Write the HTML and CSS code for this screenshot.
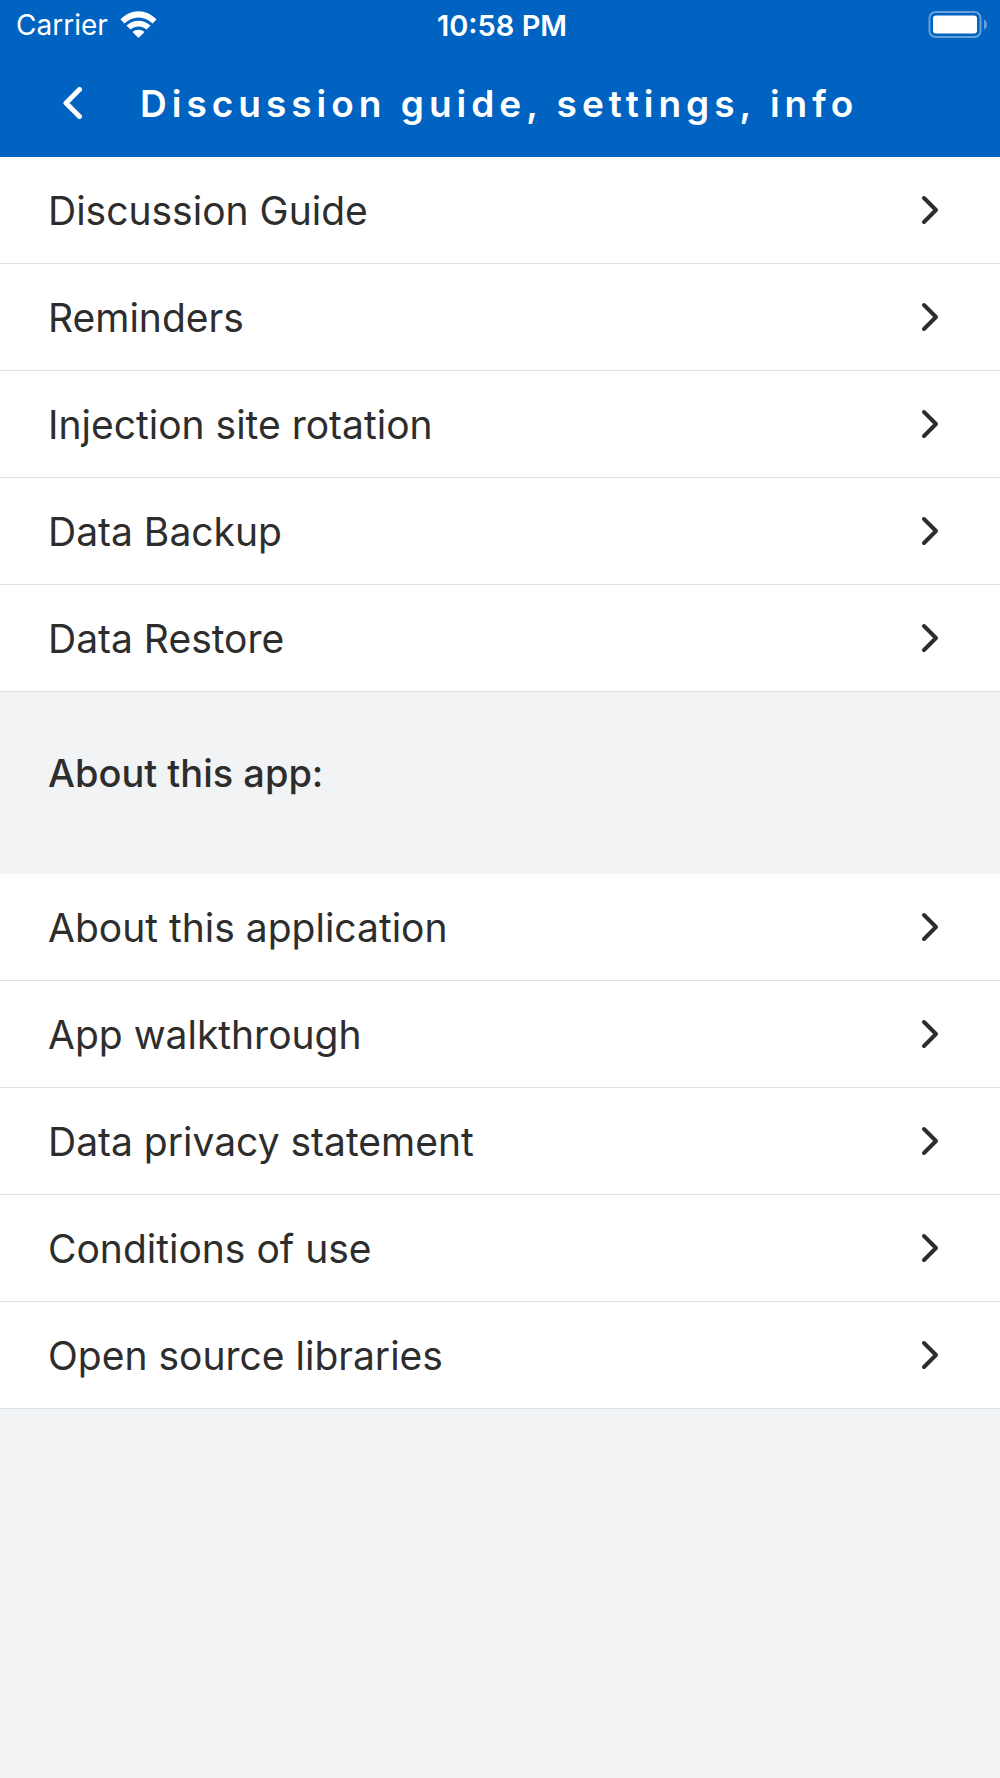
FILE: index.html
```html
<!DOCTYPE html>
<html lang="en">
<head>
    <meta charset="UTF-8">
    <meta name="viewport" content="width=device-width, initial-scale=1.0">
    <title>Discussion guide, settings, info</title>
    <link rel="stylesheet" href="styles.css">
</head>
<body>
    <header>
        <div class="status-bar">
            <div class="carrier">
                <span>Carrier</span>
                <svg class="wifi" viewBox="0 0 37 28" aria-hidden="true">
                    <path d="M0.5 8.5C10.5 -2.5 26.5 -2.5 36.5 8.5L32.5 12.5C24.5 4.5 12.5 4.5 4.5 12.5Z"/>
                    <path d="M6.5 14.5C13.5 8 23.5 8 30.5 14.5L26.5 18.5C22 14.5 15 14.5 10.5 18.5Z"/>
                    <path d="M12.5 21C16 18 21 18 24.5 21L18.5 27Z"/>
                </svg>
            </div>
            <span class="time">10:58 PM</span>
            <svg class="battery" viewBox="0 0 60 28" aria-hidden="true">
                <rect class="battery-case" x="1.5" y="1" width="51" height="25" rx="6"/>
                <rect class="battery-level" x="5" y="4.5" width="44" height="18" rx="3"/>
                <path class="battery-tip" d="M56 8.5Q59 10 59 13.5T56 18.5Z"/>
            </svg>
        </div>
        <nav class="nav-bar">
            <button class="back-btn" aria-label="Back">
                <svg class="back-icon" viewBox="0 0 20 32"><path d="M16.5 2.5L3 16L16.5 29.5"/></svg>
            </button>
            <h1>Discussion guide, settings, info</h1>
        </nav>
    </header>

    <main>
        <ul class="menu">
            <li><a href="#guide">Discussion Guide <svg class="chevron" viewBox="0 0 18 30"><path d="M3 3L15 15L3 27"/></svg></a></li>
            <li><a href="#reminders">Reminders <svg class="chevron" viewBox="0 0 18 30"><path d="M3 3L15 15L3 27"/></svg></a></li>
            <li><a href="#rotation">Injection site rotation <svg class="chevron" viewBox="0 0 18 30"><path d="M3 3L15 15L3 27"/></svg></a></li>
            <li><a href="#backup">Data Backup <svg class="chevron" viewBox="0 0 18 30"><path d="M3 3L15 15L3 27"/></svg></a></li>
            <li><a href="#restore">Data Restore <svg class="chevron" viewBox="0 0 18 30"><path d="M3 3L15 15L3 27"/></svg></a></li>
        </ul>

        <h2>About this app:</h2>

        <ul class="menu">
            <li><a href="#about">About this application <svg class="chevron" viewBox="0 0 18 30"><path d="M3 3L15 15L3 27"/></svg></a></li>
            <li><a href="#walkthrough">App walkthrough <svg class="chevron" viewBox="0 0 18 30"><path d="M3 3L15 15L3 27"/></svg></a></li>
            <li><a href="#privacy">Data privacy statement <svg class="chevron" viewBox="0 0 18 30"><path d="M3 3L15 15L3 27"/></svg></a></li>
            <li><a href="#conditions">Conditions of use <svg class="chevron" viewBox="0 0 18 30"><path d="M3 3L15 15L3 27"/></svg></a></li>
            <li><a href="#libraries">Open source libraries <svg class="chevron" viewBox="0 0 18 30"><path d="M3 3L15 15L3 27"/></svg></a></li>
        </ul>
    </main>
</body>
</html>
```

FILE: styles.css
```css
* {
    box-sizing: border-box;
}

body {
    font-family: Inter, 'Liberation Sans', sans-serif;
    margin: 0;
    background-color: #f2f3f5;
    color: #2d2d2d;
}

header {
    background-color: #0063c1;
    color: white;
}

.status-bar {
    display: grid;
    grid-template-columns: 1fr auto 1fr;
    align-items: center;
    height: 50px;
    padding: 0 12px 0 16px;
    font-size: 28px;
}

.carrier {
    display: flex;
    align-items: center;
    gap: 12px;
}

.wifi {
    width: 37px;
    height: 28px;
    fill: white;
}

.time {
    font-size: 29px;
    font-weight: 600;
}

.battery {
    justify-self: end;
    width: 60px;
    height: 28px;
}

.battery-case {
    fill: none;
    stroke: #66a1da;
    stroke-width: 2;
}

.battery-level {
    fill: white;
}

.battery-tip {
    fill: #66a1da;
}

.nav-bar {
    display: flex;
    align-items: center;
    height: 107px;
    padding: 0 48px;
}

.back-btn {
    display: flex;
    align-items: center;
    justify-content: center;
    width: 50px;
    height: 60px;
    padding: 0 0 2px;
    border: none;
    background: none;
    cursor: pointer;
}

.back-icon {
    width: 20px;
    height: 32px;
}

.back-icon path,
.chevron path {
    fill: none;
    stroke: white;
    stroke-width: 5;
    stroke-linecap: round;
    stroke-linejoin: round;
}

h1 {
    margin: 0 0 0 42px;
    font-size: 37px;
    font-weight: 600;
    letter-spacing: 5px;
    white-space: nowrap;
}

.menu {
    list-style: none;
    margin: 0;
    padding: 0;
    background-color: white;
}

.menu a {
    display: flex;
    align-items: center;
    justify-content: space-between;
    height: 107px;
    padding: 0 61px 0 48px;
    border-bottom: 1px solid #dfe1e8;
    font-size: 39px;
    color: inherit;
    text-decoration: none;
}

.chevron {
    width: 18px;
    height: 30px;
}

.chevron path {
    stroke: #2d2d2d;
    stroke-width: 4;
}

h2 {
    margin: 0;
    padding: 57px 48px 77px;
    font-size: 38px;
    font-weight: 500;
    line-height: 48px;
}
```
